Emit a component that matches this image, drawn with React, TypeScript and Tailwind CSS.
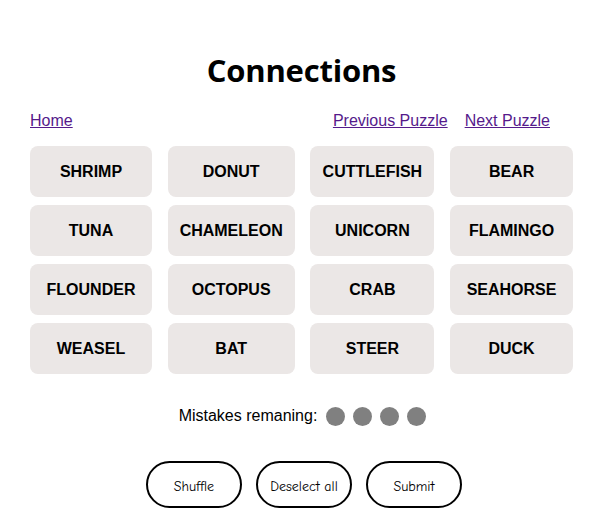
import { useState } from "react"

const words = [
  "SHRIMP", "DONUT", "CUTTLEFISH", "BEAR",
  "TUNA", "CHAMELEON", "UNICORN", "FLAMINGO",
  "FLOUNDER", "OCTOPUS", "CRAB", "SEAHORSE",
  "WEASEL", "BAT", "STEER", "DUCK",
]

export default function App() {
  const [selected, setSelected] = useState<string[]>([])

  const toggle = (w: string) => {
    setSelected((s) =>
      s.includes(w) ? s.filter((x) => x !== w) : s.length < 4 ? [...s, w] : s
    )
  }

  return (
    <div className="min-h-screen bg-white font-['Liberation_Sans',Arial,sans-serif] text-black">
      <div className="ml-[30px] w-[543px] pt-[50px]">
        <h1 className="text-center font-['Open_Sans',sans-serif] text-[31px] font-bold leading-[40px] tracking-[-0.2px]">
          Connections
        </h1>

        <div className="mt-[21px] flex items-center justify-between pr-[23px] text-base leading-5">
          <a href="#" className="text-[#551a8b] underline">
            Home
          </a>
          <div className="flex gap-[17px]">
            <a href="#" className="text-[#551a8b] underline">
              Previous Puzzle
            </a>
            <a href="#" className="text-[#551a8b] underline">
              Next Puzzle
            </a>
          </div>
        </div>

        <div className="mt-[15px] grid grid-cols-[122px_127px_124px_123px] gap-x-[15.7px] gap-y-2">
          {words.map((w) => (
            <button
              key={w}
              onClick={() => toggle(w)}
              className={`h-[51px] rounded-lg text-base font-bold ${
                selected.includes(w) ? "bg-[#5a594e] text-white" : "bg-[#ebe7e6] text-black"
              }`}
            >
              {w}
            </button>
          ))}
        </div>

        <div className="mt-[30px] flex items-center justify-center gap-[10px] pl-[2px] text-base">
          <span className="mr-[-1px]">Mistakes remaning:</span>
          <div className="flex gap-2">
            {[0, 1, 2, 3].map((i) => (
              <span key={i} className="h-[19px] w-[19px] rounded-full bg-[#808080]" />
            ))}
          </div>
        </div>

        <div className="mt-[33px] flex justify-center gap-[14px] pl-[5px] font-['Comic_Sans_MS','Comic_Neue',cursive] text-[14px]">
          {["Shuffle", "Deselect all", "Submit"].map((b) => (
            <button
              key={b}
              className="h-[47px] w-[96px] rounded-full border-2 border-black bg-white pt-[3px]"
            >
              {b}
            </button>
          ))}
        </div>
      </div>
    </div>
  )
}
